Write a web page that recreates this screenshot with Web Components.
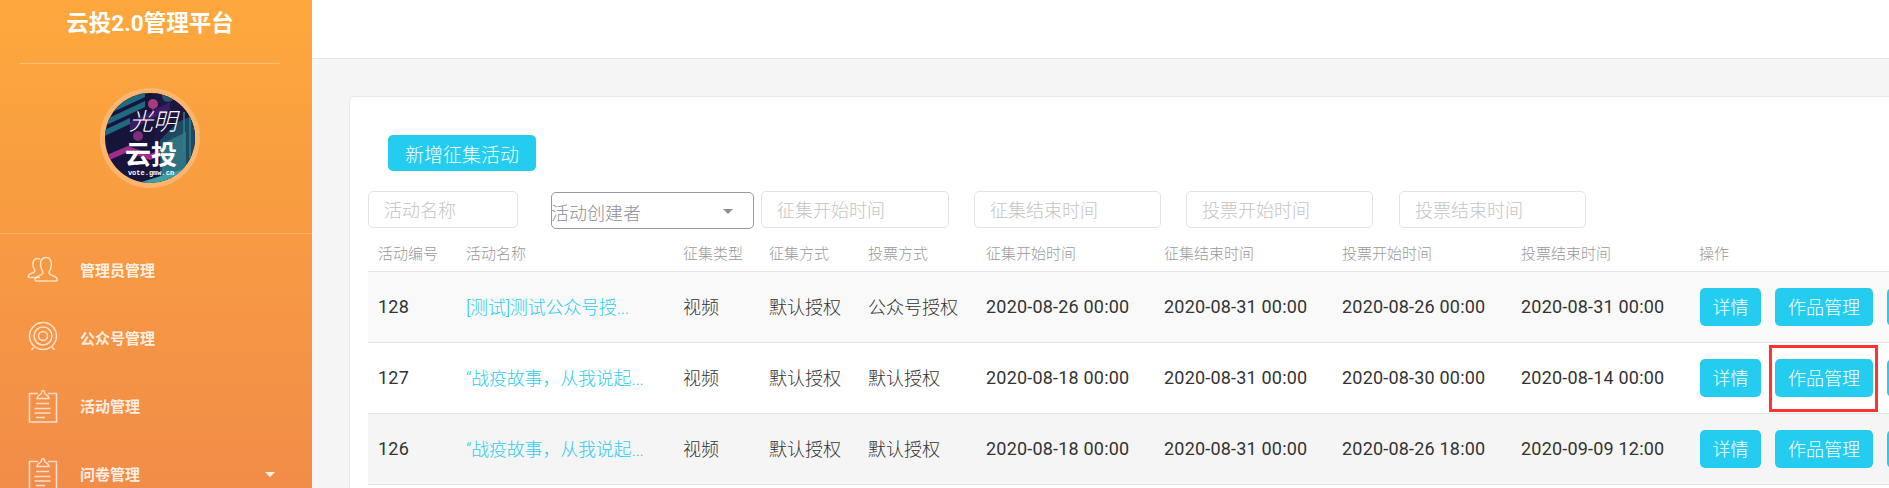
<!DOCTYPE html>
<html lang="zh">
<head>
<meta charset="utf-8">
<title>云投2.0管理平台</title>
<style>
  html, body { margin: 0; height: 488px; overflow: hidden; background: #f5f5f5; }
  body { font-family: Roboto, "Noto Sans CJK SC", sans-serif; }
</style>
</head>
<body>
<app-shell>
  <app-sidebar slot="side">
    <nav-item label="管理员管理" icon="users"></nav-item>
    <nav-item label="公众号管理" icon="target"></nav-item>
    <nav-item label="活动管理" icon="clip"></nav-item>
    <nav-item label="问卷管理" icon="clip" caret></nav-item>
  </app-sidebar>
  <activity-card>
    <cyan-button slot="tools" size="big">新增征集活动</cyan-button>
    <filter-input slot="filters" style="width:150px">活动名称</filter-input>
    <filter-select slot="filters" style="width:203px;margin-left:33px">活动创建者</filter-select>
    <filter-input slot="filters" style="width:188px;margin-left:7px">征集开始时间</filter-input>
    <filter-input slot="filters" style="width:187px;margin-left:25px">征集结束时间</filter-input>
    <filter-input slot="filters" style="width:187px;margin-left:25px">投票开始时间</filter-input>
    <filter-input slot="filters" style="width:187px;margin-left:26px">投票结束时间</filter-input>
    <table-row slot="rows" head cells="活动编号|活动名称|征集类型|征集方式|投票方式|征集开始时间|征集结束时间|投票开始时间|投票结束时间|操作"></table-row>
    <table-row slot="rows" bg="#f9f9f9" cells="128|[测试]测试公众号授...|视频|默认授权|公众号授权|2020-08-26 00:00|2020-08-31 00:00|2020-08-26 00:00|2020-08-31 00:00"></table-row>
    <table-row slot="rows" bg="#ffffff" marked cells="127|“战疫故事，从我说起...|视频|默认授权|默认授权|2020-08-18 00:00|2020-08-31 00:00|2020-08-30 00:00|2020-08-14 00:00"></table-row>
    <table-row slot="rows" bg="#f5f5f5" cells="126|“战疫故事，从我说起...|视频|默认授权|默认授权|2020-08-18 00:00|2020-08-31 00:00|2020-08-26 18:00|2020-09-09 12:00"></table-row>
  </activity-card>
</app-shell>

<script>
class AppShell extends HTMLElement
{
  constructor()
  {
    super();
    this.attachShadow({mode: "open"});
    this.shadowRoot.innerHTML = `
      <style>
        :host { display: flex; width: 1889px; height: 488px; overflow: hidden; }
        .side { flex: 0 0 312px; }
        .main { flex: 1 1 auto; min-width: 0; display: flex; flex-direction: column; }
        .top { flex: 0 0 58px; background: #fff; border-bottom: 1px solid #e6e6e6; }
        .content { padding: 37px 0 0 37px; }
      </style>
      <div class="side"><slot name="side"></slot></div>
      <div class="main">
        <div class="top"></div>
        <div class="content"><slot></slot></div>
      </div>
    `;
  }
}

class AppSidebar extends HTMLElement
{
  constructor()
  {
    super();
    this.attachShadow({mode: "open"});
    this.shadowRoot.innerHTML = `
      <style>
        :host {
          display: block;
          height: 488px;
          color: #fff;
          background: linear-gradient(180deg, #fda83c 0%, #f28c49 100%);
          font-family: Roboto, "Noto Sans CJK SC", sans-serif;
        }
        h1 {
          margin: 0 32px 0 20px;
          height: 64px;
          box-sizing: border-box;
          padding-top: 8px;
          border-bottom: 1px solid rgba(255, 255, 255, .3);
          font-size: 22.5px;
          line-height: 30px;
          font-weight: 700;
          text-align: center;
        }
        .logo {
          display: flex;
          justify-content: center;
          padding: 24px 12px 45px 0;
          border-bottom: 1px solid rgba(255, 255, 255, .2);
        }
        svg { display: block; }
        .menu { padding-top: 2px; }
      </style>
      <h1>云投2.0管理平台</h1>
      <div class="logo">
        <svg width="100" height="100" viewBox="0 0 100 100">
          <defs><clipPath id="c"><circle cx="50" cy="50" r="45"/></clipPath></defs>
          <circle cx="50" cy="50" r="50" fill="#fbb56d"/>
          <g clip-path="url(#c)">
            <rect width="100" height="100" fill="#16143a"/>
            <path d="M55 0H100V60L75 50 55 62Z" fill="#1c1640"/>
            <path d="M0 24L45 3V9L0 30ZM0 34L45 13V19L0 40ZM0 44L30 30V36L0 50Z" fill="#1f6a80"/>
            <path d="M30 34L70 14V22L30 42Z" fill="#3c1a66"/>
            <path d="M0 70L28 58 50 66 80 54V60L50 72 28 64 0 76Z" fill="#a02c8c"/>
            <path d="M78 34L100 24V100H60V52Z" fill="#1d4a62"/>
            <path d="M62 56L86 44V100H62Z" fill="#2f7382"/>
            <path d="M22 100L100 76V100Z" fill="#3f9fa6"/>
            <path d="M84 24V64M90 24V70" stroke="#2f7f8c" stroke-width="1.5"/>
            <circle cx="53" cy="16" r="5" fill="#a83b7d"/>
            <path d="M53 20V28" stroke="#a83b7d" stroke-width="1"/>
            <circle cx="38" cy="48" r="5" fill="#7d2d7a"/>
            <circle cx="68" cy="8" r="6" fill="#27566e"/>
            <text x="53" y="42" text-anchor="middle" font-family="'Noto Sans CJK SC', sans-serif" font-size="24" font-weight="300" font-style="italic" fill="#fff">光明</text>
            <text x="51" y="76" text-anchor="middle" font-family="'Noto Sans CJK SC', sans-serif" font-size="26" font-weight="700" fill="#fff">云投</text>
            <text x="51" y="87" text-anchor="middle" font-family="'Liberation Mono', monospace" font-size="7" font-weight="700" fill="#fff">vote.gmw.cn</text>
          </g>
        </svg>
      </div>
      <div class="menu"><slot></slot></div>
    `;
  }
}

class NavItem extends HTMLElement
{
  icons = {
    users: `<path d="M13 24.5H2.2c-.7 0-1-.4-1-1 0-1.500 1-2.300 3-3 2.500-.8 3.600-1.500 3.600-3 0-1-1-1.800-1.500-3.400C5.700 12.500 5.800 10 6.300 8.500 7 6.500 8.500 5.500 10.500 5.500c1 0 2 .3 2.800 1"/>
            <path d="M9.500 28h19.600c.8 0 1.200-.5 1.200-1.200 0-2-1.300-3-3.600-3.700-3.200-1-4.700-1.600-4.700-3.500 0-1.200 1-2 1.700-4 .8-2.300.9-5.300.3-7.300C23.300 6 21.500 4.500 19 4.500S14.700 6 14 8.300c-.6 2-.5 5 .3 7.300.7 2 1.700 2.800 1.700 4 0 1.900-1.500 2.500-4.700 3.500-2.200.7-3.300 1.700-3.300 3.700 0 .7.600 1.200 1.500 1.200Z"/>`,
    target: `<circle cx="16" cy="15" r="13.500"/><circle cx="16" cy="15" r="9"/><circle cx="16" cy="15" r="4.500"/>
             <path d="M7 26l-2.500 3M25 26l2.500 3"/>`,
    clip: `<path d="M11 4.500H2.500V33h27V4.500H21"/>
           <path d="M10 9.500h12c0-2.500-2-3-3.800-4.500-.6-.6-.8-1.500-.9-2.500-.2-1.300-2.400-1.300-2.600 0-.1 1-.3 1.900-.9 2.500C12 6.500 10 7 10 9.500Z"/>
           <path d="M9 14.500h13M7.500 19.500h16M7.500 24h16M9 28.500h9"/>`,
  };

  constructor()
  {
    super();
    this.attachShadow({mode: "open"});
    const caret = this.hasAttribute("caret") ? `<i></i>` : "";
    this.shadowRoot.innerHTML = `
      <style>
        :host {
          display: flex;
          align-items: center;
          height: 68px;
          padding-left: 27px;
          color: rgba(255, 255, 255, .86);
          font-size: 15px;
          font-weight: 700;
        }
        svg { flex: 0 0 32px; fill: none; stroke: rgba(255, 255, 255, .72); stroke-width: 1.5; }
        span { margin-left: 21px; padding-bottom: 2px; flex: 1; }
        i {
          width: 0;
          height: 0;
          margin-right: 37px;
          border: 5px solid transparent;
          border-top-color: rgba(255, 255, 255, .9);
          border-bottom-width: 0;
        }
      </style>
      <svg width="32" height="34" viewBox="0 0 32 34">${this.icons[this.getAttribute("icon")]}</svg>
      <span>${this.getAttribute("label")}</span>
      ${caret}
    `;
  }
}

class CyanButton extends HTMLElement
{
  constructor()
  {
    super();
    this.attachShadow({mode: "open"});
    this.shadowRoot.innerHTML = `
      <style>
        :host {
          display: inline-flex;
          align-items: center;
          justify-content: center;
          box-sizing: border-box;
          height: 38px;
          padding: 0 15px 2px;
          border-radius: 5px;
          background: #24cdf0;
          color: #fff;
          font-size: 18px;
          font-weight: 300;
          white-space: nowrap;
          flex: none;
        }
        :host([size="big"]) { height: 36px; width: 148px; font-size: 19px; padding: 0; }
      </style>
      <slot></slot>
    `;
  }
}

class FilterInput extends HTMLElement
{
  constructor()
  {
    super();
    this.attachShadow({mode: "open"});
    this.shadowRoot.innerHTML = `
      <style>
        :host {
          display: flex;
          align-items: center;
          box-sizing: border-box;
          height: 37px;
          padding: 0 0 2px 15px;
          border: 1px solid #e3e3e3;
          border-radius: 5px;
          color: #c4c4c4;
          font-size: 18px;
          font-weight: 300;
          flex: none;
        }
      </style>
      <slot></slot>
    `;
  }
}

class FilterSelect extends HTMLElement
{
  constructor()
  {
    super();
    this.attachShadow({mode: "open"});
    this.shadowRoot.innerHTML = `
      <style>
        :host {
          display: flex;
          align-items: center;
          justify-content: space-between;
          box-sizing: border-box;
          height: 37px;
          margin-top: 1px;
          padding: 2px 20px 0 0;
          border: 1px solid #999;
          border-radius: 5px;
          color: #8f8f8f;
          font-size: 18px;
          font-weight: 300;
          flex: none;
        }
        span { margin-left: -1px; }
        i { width: 0; height: 0; border: 5px solid transparent; border-top-color: #8f8f8f; border-bottom-width: 0; }
      </style>
      <span><slot></slot></span><i></i>
    `;
  }
}

class TableRow extends HTMLElement
{
  constructor()
  {
    super();
    this.attachShadow({mode: "open"});
    const cells = this.getAttribute("cells").split("|");
    const isHead = this.hasAttribute("head");
    // digits read heavier than the chinese text in the reference
    const cellClass = (text, i) =>
    {
      if (isHead) return "";
      if (i === 1) return "link";
      return /^[\d\- :]+$/.test(text) ? "num" : "";
    };
    let html = cells.map((text, i) => `<div class="${cellClass(text, i)}">${text}</div>`).join("");
    if (!isHead)
    {
      const mark = this.hasAttribute("marked") ? `<b class="mark"></b>` : "";
      html += `<div class="ops">
                 <cyan-button style="width:61px;padding-left:0;padding-right:0">详情</cyan-button>
                 <span class="wrap"><cyan-button style="width:98px;padding-left:0;padding-right:0">作品管理</cyan-button>${mark}</span>
                 <cyan-button style="width:60px"></cyan-button>
               </div>`;
    }
    this.shadowRoot.innerHTML = `
      <style>
        :host {
          display: grid;
          grid-template-columns: 88px 217px 86px 99px 118px 178px 178px 179px 178px 260px;
          box-sizing: border-box;
          height: 71px;
          align-items: center;
          border-bottom: 1px solid #e5e5e5;
          background: ${this.getAttribute("bg") || "transparent"};
          color: #333;
          font-size: 18px;
          font-weight: 300;
        }
        :host([head]) { height: 44px; align-items: end; padding-bottom: 8px; color: #999; font-size: 15px; background: #fff; }
        div { padding: 0 0 2px 10px; white-space: nowrap; }
        :host([head]) div { padding-bottom: 0; }
        .num { font-weight: 400; letter-spacing: .2px; }
        .link { color: #2ccdf0; letter-spacing: -.2px; }
        .ops { display: flex; gap: 14px; padding: 0 0 0 11px; }
        .wrap { position: relative; display: flex; }
        .mark { position: absolute; left: -6px; right: -5px; top: -14px; bottom: -15px; border: 3px solid #f33; }
      </style>
      ${html}
    `;
  }
}

class ActivityCard extends HTMLElement
{
  constructor()
  {
    super();
    this.attachShadow({mode: "open"});
    this.shadowRoot.innerHTML = `
      <style>
        :host {
          display: block;
          box-sizing: border-box;
          width: 1600px;
          height: 460px;
          background: #fff;
          border: 1px solid #e8e8e8;
          border-radius: 6px 0 0 0;
          padding: 38px 0 0 18px;
        }
        .tools { padding-left: 20px; height: 56px; }
        .filters { display: flex; align-items: flex-start; height: 37px; }
      </style>
      <div class="tools"><slot name="tools"></slot></div>
      <div class="filters"><slot name="filters"></slot></div>
      <slot name="rows"></slot>
    `;
  }
}

customElements.define("cyan-button", CyanButton);
customElements.define("app-shell", AppShell);
customElements.define("app-sidebar", AppSidebar);
customElements.define("nav-item", NavItem);
customElements.define("filter-input", FilterInput);
customElements.define("filter-select", FilterSelect);
customElements.define("table-row", TableRow);
customElements.define("activity-card", ActivityCard);
</script>
</body>
</html>
